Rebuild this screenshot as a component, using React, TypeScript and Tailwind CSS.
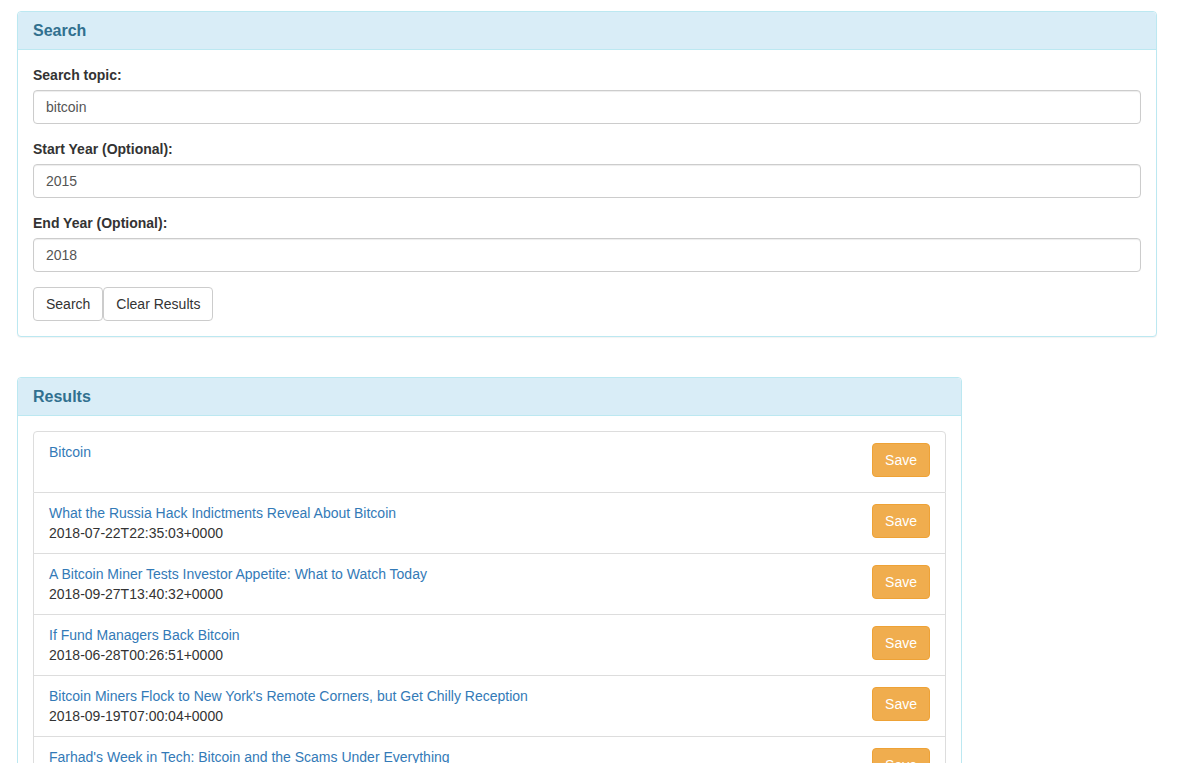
const articles = [
  { title: "Bitcoin", date: "" },
  {
    title: "What the Russia Hack Indictments Reveal About Bitcoin",
    date: "2018-07-22T22:35:03+0000",
  },
  {
    title: "A Bitcoin Miner Tests Investor Appetite: What to Watch Today",
    date: "2018-09-27T13:40:32+0000",
  },
  { title: "If Fund Managers Back Bitcoin", date: "2018-06-28T00:26:51+0000" },
  {
    title: "Bitcoin Miners Flock to New York's Remote Corners, but Get Chilly Reception",
    date: "2018-09-19T07:00:04+0000",
  },
  {
    title: "Farhad's Week in Tech: Bitcoin and the Scams Under Everything",
    date: "2018-06-01T14:00:02+0000",
  },
];

const Field = ({ label, value }: { label: string; value: string }) => (
  <div className="mb-[15px]">
    <label className="block font-bold mb-[5px] leading-5">{label}</label>
    <input
      readOnly
      value={value}
      className="block w-full h-[34px] px-3 py-1.5 text-[14px] text-[#555] bg-white border border-[#ccc] rounded shadow-[inset_0_1px_1px_rgba(0,0,0,0.075)] outline-none"
    />
  </div>
);

const App = () => {
  return (
    <div
      className="min-h-screen bg-white text-[14px] leading-5 text-[#333] pl-[17px] pr-[26px] pt-[11px]"
      style={{ fontFamily: '"Liberation Sans", Arial, sans-serif' }}
    >
      <div className="border border-[#bce8f1] rounded bg-white shadow-[0_1px_1px_rgba(0,0,0,0.05)]">
        <div className="bg-[#d9edf7] border-b border-[#bce8f1] rounded-t px-[15px] py-[10px] text-[16px] leading-[17px] font-bold text-[#31708f]">
          Search
        </div>
        <div className="p-[15px]">
          <Field label="Search topic:" value="bitcoin" />
          <Field label="Start Year (Optional):" value="2015" />
          <Field label="End Year (Optional):" value="2018" />
          <div className="flex">
            <button className="h-[34px] px-3 border border-[#ccc] rounded bg-white text-[#333]">
              Search
            </button>
            <button className="h-[34px] px-3 border border-[#ccc] rounded bg-white text-[#333]">
              Clear Results
            </button>
          </div>
        </div>
      </div>

      <div className="mt-[40px] w-[945px] border border-[#bce8f1] rounded bg-white">
        <div className="bg-[#d9edf7] border-b border-[#bce8f1] rounded-t px-[15px] py-[10px] text-[16px] leading-[17px] font-bold text-[#31708f]">
          Results
        </div>
        <div className="p-[15px]">
          <ul>
            {articles.map((a, i) => (
              <li
                key={i}
                className={`flex justify-between items-start px-[15px] py-[10px] border-x border-b border-[#ddd] ${
                  i === 0 ? "border-t rounded-t" : ""
                }`}
              >
                <div>
                  <a href="#" className="block text-[#337ab7]">
                    {a.title}
                  </a>
                  <div className="h-5">{a.date}</div>
                </div>
                <button className="mt-px h-[34px] px-3 rounded bg-[#f0ad4e] border border-[#eea236] text-white">
                  Save
                </button>
              </li>
            ))}
          </ul>
        </div>
      </div>
    </div>
  );
};

export default App;
